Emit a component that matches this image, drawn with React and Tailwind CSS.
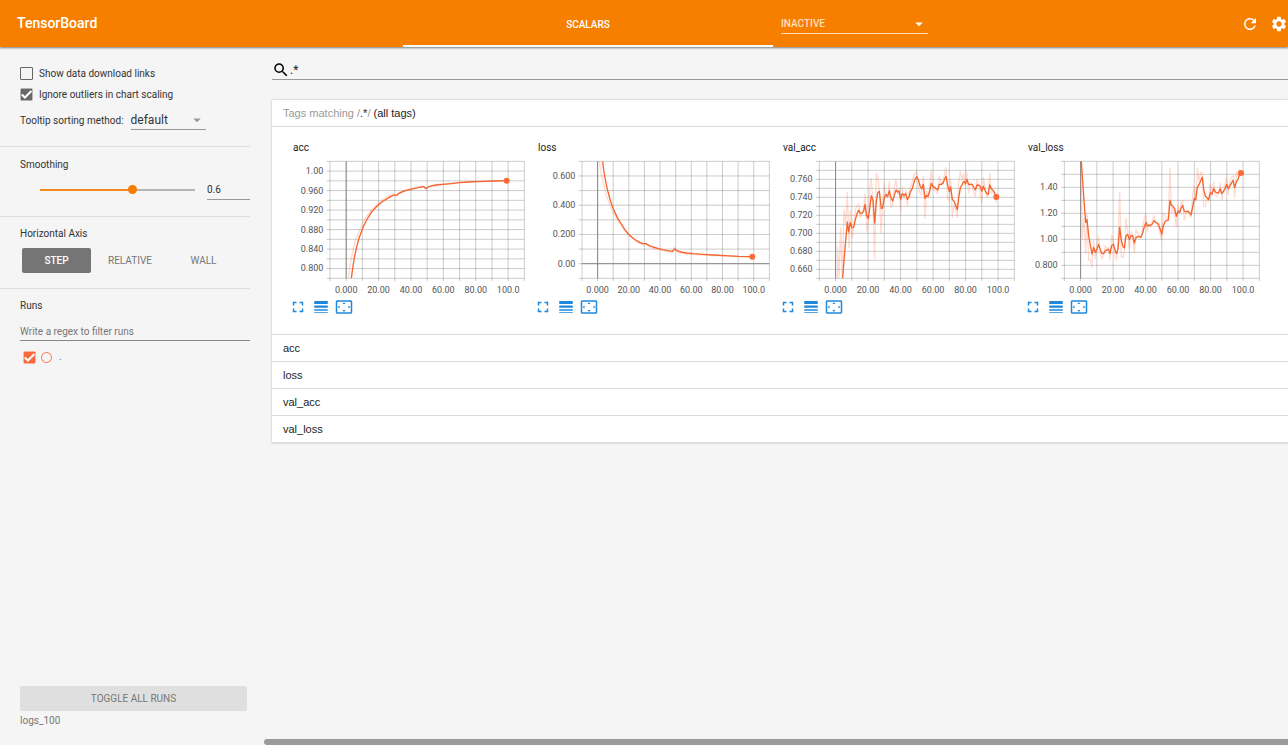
import {
  MdArrowDropDown,
  MdCheck,
  MdFullscreen,
  MdLineWeight,
  MdRefresh,
  MdSearch,
  MdSettings,
  MdSettingsOverscan,
} from 'react-icons/md';

const X_LABELS = ['0.000', '20.00', '40.00', '60.00', '80.00', '100.0'];

// Plot geometry is in chart units, three to a pixel.
const CHARTS = [
  {
    name: 'acc',
    left: 150,
    rows: 12,
    labels: [[108, '1.00'], [167, '0.960'], [225, '0.920'], [284, '0.880'], [342, '0.840'], [400, '0.800']],
    smooth:
      'M214 430 L218 400 L223 368 L229 340 L236 313 L243 293 L251 273 L260 255 L269 240 L278 227 L288 217 L298 207 L310 198 L322 191 L333 184 L342 180 L350 181 L358 175 L368 170 L380 166 L392 163 L405 160 L418 157 L432 155 L437 160 L443 157 L453 153 L470 150 L490 148 L514 146 L539 143 L565 141 L590 140 L620 139 L650 138 L680 137',
    raw: 'M205 430 L208 405 L213 376 L219 345 L227 313 L236 293 L245 272 L254 253 L263 240 L272 228 L282 217 L293 207 L306 196 L318 188 L330 181 L341 177 L348 183 L356 173 L380 163 L405 158 L430 153 L438 165 L446 154 L470 148 L539 142 L620 138 L680 136',
    end: [680, 137],
  },
  {
    name: 'loss',
    left: 171,
    rows: 8,
    zero: 386,
    labels: [[123, '0.600'], [211, '0.400'], [298, '0.200'], [386, '0.00']],
    smooth:
      'M233 79 L236 105 L241 134 L247 163 L254 189 L262 214 L270 233 L279 251 L289 267 L299 283 L310 297 L321 307 L332 315 L344 322 L353 326 L363 326 L372 331 L384 336 L398 340 L413 344 L428 347 L443 349 L449 342 L456 347 L468 351 L485 354 L505 356 L535 358 L565 360 L600 362 L640 364 L681 365',
    raw: 'M223 79 L228 110 L234 141 L242 173 L251 201 L261 225 L271 244 L282 262 L294 279 L306 294 L318 307 L331 318 L344 325 L353 329 L362 324 L370 334 L384 340 L413 347 L442 352 L448 336 L457 352 L485 357 L535 360 L600 363 L681 366',
    end: [682, 365],
  },
  {
    name: 'val_acc',
    left: 148,
    rows: 13,
    labels: [[133, '0.760'], [187, '0.740'], [241, '0.720'], [295, '0.700'], [349, '0.680'], [402, '0.660']],
    smooth:
      'M218 430 L222 376 L227 318 L232 261 L236 291 L241 263 L246 278 L251 277 L256 254 L261 237 L266 225 L271 235 L276 235 L281 229 L285 208 L290 242 L295 251 L300 213 L304 182 L309 196 L314 264 L319 199 L323 174 L328 169 L334 221 L338 218 L343 187 L348 178 L353 185 L358 167 L362 187 L368 198 L373 181 L378 165 L383 171 L387 168 L392 192 L397 176 L402 182 L407 176 L412 193 L417 186 L421 171 L427 160 L432 142 L436 131 L440 125 L445 134 L450 152 L455 162 L460 148 L465 190 L469 182 L474 184 L479 169 L484 145 L489 154 L495 158 L503 165 L508 148 L514 148 L519 145 L523 135 L528 124 L533 151 L538 170 L542 156 L547 193 L552 199 L557 210 L562 224 L566 190 L571 158 L576 150 L581 139 L587 146 L591 133 L596 149 L601 148 L606 148 L611 156 L616 165 L621 150 L627 151 L631 154 L635 169 L640 154 L645 166 L650 175 L655 178 L659 150 L664 161 L669 166 L674 173 L679 186',
    raw: 'M202 430 L203 335 L207 430 L212 280 L217 430 L222 226 L227 265 L232 172 L237 338 L241 225 L246 310 L251 270 L257 220 L262 213 L266 207 L271 248 L276 230 L281 222 L285 177 L291 290 L295 260 L299 160 L304 130 L309 215 L314 370 L319 114 L323 125 L328 165 L333 295 L338 215 L343 142 L348 190 L353 180 L358 140 L363 218 L368 210 L373 155 L378 134 L383 178 L388 160 L392 230 L397 155 L402 190 L407 165 L412 212 L417 174 L422 154 L427 140 L432 120 L440 110 L445 148 L450 175 L455 180 L460 124 L465 250 L470 170 L475 190 L480 145 L484 107 L489 165 L495 163 L503 177 L508 124 L514 146 L519 140 L524 115 L528 98 L533 190 L538 198 L542 135 L547 248 L552 208 L557 225 L562 247 L566 145 L571 110 L576 136 L581 116 L586 155 L590 111 L596 172 L601 144 L606 148 L611 170 L616 185 L621 134 L627 151 L635 205 L640 128 L650 188 L655 180 L659 116 L664 175 L669 170 L674 182 L679 202',
    end: [679, 186],
  },
  {
    name: 'val_loss',
    left: 148,
    rows: 9,
    labels: [[157, '1.40'], [235, '1.20'], [313, '1.00'], [391, '0.800']],
    smooth:
      'M199 79 L203 140 L208 210 L212 262 L216 254 L221 302 L226 330 L231 357 L236 338 L241 352 L246 343 L251 328 L256 345 L261 355 L266 356 L271 347 L281 343 L285 356 L290 332 L295 328 L300 345 L305 356 L309 342 L314 277 L319 316 L324 335 L328 339 L333 302 L338 298 L343 313 L348 303 L353 302 L358 324 L363 308 L370 304 L378 306 L383 294 L388 275 L393 262 L397 273 L402 270 L407 271 L412 267 L417 257 L422 262 L427 264 L431 269 L436 284 L440 298 L445 273 L450 260 L455 256 L460 255 L465 196 L469 210 L474 214 L479 221 L484 244 L489 228 L494 232 L499 218 L503 211 L508 229 L514 230 L519 229 L524 234 L528 240 L533 216 L538 190 L542 194 L547 157 L552 149 L557 137 L562 126 L566 163 L571 183 L576 188 L581 194 L586 173 L591 177 L596 161 L601 170 L606 174 L611 173 L616 161 L620 176 L625 169 L630 162 L635 148 L640 161 L645 152 L650 143 L654 136 L659 158 L664 141 L669 133 L673 120 L679 114',
    raw: 'M198 79 L202 310 L207 250 L212 355 L216 235 L221 375 L226 374 L231 397 L236 315 L241 370 L246 325 L251 305 L256 355 L261 372 L266 358 L271 332 L276 345 L281 337 L285 375 L290 300 L295 320 L300 365 L305 375 L309 320 L314 173 L319 366 L324 368 L329 345 L333 250 L338 289 L343 340 L348 290 L353 300 L358 355 L363 283 L368 295 L378 310 L383 280 L388 250 L393 240 L397 290 L402 268 L407 275 L412 255 L417 242 L422 262 L427 268 L431 280 L436 300 L440 315 L445 235 L450 238 L455 250 L460 251 L465 101 L470 235 L474 215 L479 237 L484 275 L489 210 L494 238 L499 200 L503 196 L508 255 L514 232 L519 225 L524 243 L528 247 L533 180 L538 155 L542 198 L547 101 L552 138 L557 112 L562 113 L566 215 L571 215 L576 192 L581 198 L586 147 L591 185 L596 143 L601 182 L606 184 L611 174 L616 145 L621 195 L630 147 L635 126 L640 178 L645 135 L650 126 L655 122 L659 188 L664 110 L669 124 L673 105 L679 112',
    end: [678, 114],
  },
];

const TOP = 79;
const BOTTOM = 430;
const RIGHT = 733;

function Plot({ chart }) {
  const { name, left, rows, zero, labels, smooth, raw, end } = chart;
  const stepX = (RIGHT - left) / 12;
  const stepY = (BOTTOM - TOP) / rows;
  const clipId = `clip-${name}`;
  return (
    <svg className="ml-1 block h-[143px] w-[236px]" viewBox="39 60 708 429" role="img" aria-label={`${name} chart`}>
      <clipPath id={clipId}>
        <rect x={left} y={TOP} width={RIGHT - left} height={BOTTOM - TOP} />
      </clipPath>
      <g stroke="#000" strokeOpacity="0.2" strokeWidth="3">
        {Array.from({ length: 13 }, (_, i) => (
          <line key={i} x1={left + i * stepX} x2={left + i * stepX} y1={TOP} y2={BOTTOM + 8} />
        ))}
        {Array.from({ length: rows + 1 }, (_, i) => (
          <line key={i} x1={left - 10} x2={RIGHT} y1={TOP + i * stepY} y2={TOP + i * stepY} />
        ))}
      </g>
      <g stroke="#8a8a8a" strokeWidth="3">
        <line x1={left + stepX} x2={left + stepX} y1={TOP} y2={BOTTOM} />
        {zero && <line x1={left} x2={RIGHT} y1={zero} y2={zero} />}
      </g>
      <g clipPath={`url(#${clipId})`} fill="none" strokeLinejoin="round">
        <path d={raw} stroke="#ff7043" strokeOpacity="0.25" strokeWidth="4" />
        <path d={smooth} stroke="#f4652f" strokeWidth="4" />
      </g>
      <circle cx={end[0]} cy={end[1]} r="9" fill="#fb6a38" />
      <g fill="#555" fontSize="27" fontFamily='Roboto, "Liberation Sans", sans-serif'>
        {labels.map(([y, text]) => (
          <text key={text} x={left - 20} y={y + 9} textAnchor="end">{text}</text>
        ))}
        {X_LABELS.map((text, i) => (
          <text key={text} x={left + stepX * (1 + 2 * i)} y="474" textAnchor="middle">{text}</text>
        ))}
      </g>
    </svg>
  );
}

function ChartCard({ chart }) {
  return (
    <article className="w-[245px]">
      <h3 className="pl-1 text-[10px] leading-[15px] text-[#222]">{chart.name}</h3>
      <Plot chart={chart} />
      <div className="flex gap-[5px] text-[#1e88dd]">
        <button type="button" aria-label={`Enlarge ${chart.name}`}><MdFullscreen size={18} /></button>
        <button type="button" aria-label={`Toggle log scale for ${chart.name}`}><MdLineWeight size={18} /></button>
        <button type="button" aria-label={`Fit ${chart.name} to data`}><MdSettingsOverscan size={18} /></button>
      </div>
    </article>
  );
}

function CheckOption({ label, checked }) {
  return (
    <label className="flex h-[21px] items-center gap-[6px]">
      <span className="relative block size-[13px]">
        <input
          type="checkbox"
          defaultChecked={checked}
          className="peer block size-[13px] appearance-none rounded-[1px] border border-[#666] checked:bg-[#686868]"
        />
        <MdCheck size={13} className="pointer-events-none absolute inset-0 hidden stroke-2 text-white peer-checked:block" />
      </span>
      {label}
    </label>
  );
}

function Sidebar() {
  return (
    <aside className="flex w-[250px] shrink-0 flex-col text-[10px] leading-[18px] text-[#333]">
      <section className="border-b border-[#dedede] pt-4 pb-4 pl-5">
        <CheckOption label="Show data download links" />
        <CheckOption label="Ignore outliers in chart scaling" checked />
        <div className="flex h-[25px] items-stretch gap-[7px]">
          <label htmlFor="sort" className="pt-[7px]">Tooltip sorting method:</label>
          <div className="relative w-[75px]">
            <select id="sort" className="h-[25px] w-full appearance-none border-b border-[#999] pt-[6px] text-[12px] text-[#333]">
              <option>default</option>
            </select>
            <MdArrowDropDown size={18} className="pointer-events-none absolute top-[6px] right-0 text-[#999]" />
          </div>
        </div>
      </section>

      <section className="border-b border-[#dedede] pt-[9px] pb-[17px] pl-5">
        <label htmlFor="smoothing" className="block">Smoothing</label>
        <div className="mt-[6px] flex h-[19px] items-center pl-5">
          <input
            id="smoothing"
            type="range"
            min="0"
            max="1"
            step="0.1"
            defaultValue="0.6"
            className="h-[2px] w-[155px] appearance-none bg-[linear-gradient(to_right,#f28a1c_60%,#b5b5b5_60%)] [&::-webkit-slider-thumb]:size-[9px] [&::-webkit-slider-thumb]:appearance-none [&::-webkit-slider-thumb]:rounded-full [&::-webkit-slider-thumb]:bg-[#f57c00]"
          />
          <input
            type="text"
            aria-label="Smoothing value"
            defaultValue="0.6"
            className="ml-3 h-[20px] w-0 grow border-b border-[#999] text-[10px] text-[#333]"
          />
        </div>
      </section>

      <section className="border-b border-[#dedede] pt-2 pb-[15px] pl-5">
        <h2>Horizontal Axis</h2>
        <div className="mt-[5px] flex h-[25px] gap-1 pl-[2px] text-[10px] text-[#777]">
          <button type="button" className="w-[69px] rounded-[2px] bg-[#757575] font-medium text-white">STEP</button>
          <button type="button" className="w-[70px]">RELATIVE</button>
          <button type="button" className="w-[69px]">WALL</button>
        </div>
      </section>

      <section className="pt-2 pl-5">
        <h2>Runs</h2>
        <input
          type="text"
          aria-label="Filter runs"
          placeholder="Write a regex to filter runs"
          className="mt-[7px] block h-[19px] w-full border-b border-[#888] placeholder:text-[#777]"
        />
        <div className="mt-[6px] flex h-5 items-center gap-[5px] pl-[3px]">
          <label htmlFor="run" className="order-3 text-[#777]">.</label>
          <span className="relative block size-[13px]">
            <input id="run" type="checkbox" defaultChecked className="peer block size-[13px] appearance-none rounded-[1px] border border-[#f8683c] checked:bg-[#f8683c]" />
            <MdCheck size={13} className="pointer-events-none absolute inset-0 hidden stroke-2 text-white peer-checked:block" />
          </span>
          <button type="button" aria-label="Show only this run" className="mr-[2px] size-[11px] rounded-full border border-[#ff7043]" />
        </div>
      </section>

      <footer className="mt-auto pb-[15px] pl-5 text-[10px] text-[#777]">
        <button type="button" className="mb-px block h-[25px] w-[227px] rounded-[2px] bg-[#dfdfdf]">TOGGLE ALL RUNS</button>
        <p>logs_100</p>
      </footer>
    </aside>
  );
}

function CategoryHeader({ children }) {
  return (
    <button type="button" className="block h-[27px] w-full border-b border-[#dcdcdc] pl-[11px] text-left font-['Liberation_Sans',Arial,sans-serif] text-[11px] text-[#222]">
      {children}
    </button>
  );
}

export default function App() {
  return (
    <div className="flex min-h-screen flex-col bg-[#f5f5f5] font-[Roboto,'Liberation_Sans',sans-serif]">
      <header className="z-10 flex h-[47px] items-stretch bg-[#f77f00] text-white shadow-[0_1px_2px_rgba(0,0,0,0.5)]">
        <h1 className="flex w-[403px] items-center pl-[17px] text-[14px] font-medium">TensorBoard</h1>
        <button type="button" className="w-[370px] border-b-2 border-white pt-[3px] text-[10px] font-medium">SCALARS</button>
        <div className="relative ml-2 w-[147px] self-center">
          <select aria-label="Inactive dashboards" className="block h-[20px] w-full appearance-none border-b border-[#ffdcb5] pt-px text-[10px] font-medium text-[#ffdfbd]">
            <option>INACTIVE</option>
          </select>
          <MdArrowDropDown size={18} className="pointer-events-none absolute top-px right-0" />
        </div>
        <div className="ml-auto flex items-center gap-[11px]">
          <button type="button" aria-label="Reload data"><MdRefresh size={18} /></button>
          <button type="button" aria-label="Settings"><MdSettings size={18} /></button>
        </div>
      </header>

      <div className="flex grow">
        <Sidebar />
        <main className="ml-[14px] flex min-w-0 grow flex-col">
          <div className="grow pt-[13px] pl-2">
            <label className="flex h-[20px] items-center border-b border-[#999]">
              <MdSearch size={18} className="text-black" />
              <input type="text" aria-label="Filter tags" defaultValue=".*" className="w-0 grow text-[12px] text-[#222]" />
            </label>
            <div className="mt-5 bg-white shadow-[0_0_2px_rgba(0,0,0,0.25)]">
              <CategoryHeader>
                <span className="text-[#999]">Tags matching /</span>.*<span className="text-[#999]">/</span> (all tags)
              </CategoryHeader>
              <section className="flex flex-wrap border-b border-[#dcdcdc] pt-[13px] pb-[18px] pl-[17px]">
                {CHARTS.map((chart) => (
                  <ChartCard key={chart.name} chart={chart} />
                ))}
              </section>
              {CHARTS.map(({ name }) => (
                <CategoryHeader key={name}>{name}</CategoryHeader>
              ))}
            </div>
          </div>
          <div className="h-[6px] rounded-l-full bg-[#9b9b9b]" />
        </main>
      </div>
    </div>
  );
}
